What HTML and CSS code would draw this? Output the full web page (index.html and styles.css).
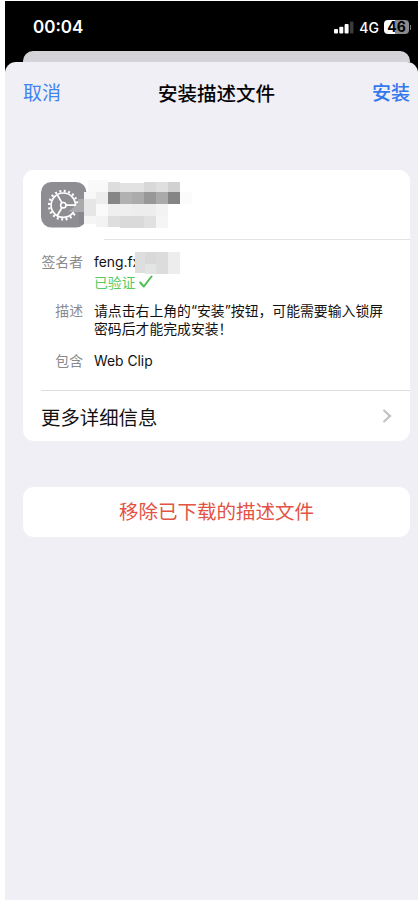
FILE: index.html
```html
<!DOCTYPE html>
<html lang="zh-CN">
<head>
<meta charset="utf-8">
<title>安装描述文件</title>
<link rel="stylesheet" href="styles.css">
</head>
<body>
<div class="phone">
  <header class="status">
    <span class="time">00:04</span>
    <div class="indicators">
      <svg class="signal" width="20" height="13" viewBox="0 0 20 13">
        <rect x="0" y="8" width="4" height="4.6" rx="1" fill="#fff"/>
        <rect x="5.3" y="5.8" width="4" height="6.8" rx="1" fill="#fff"/>
        <rect x="10.6" y="3" width="4" height="9.6" rx="1" fill="#fff"/>
        <rect x="15.9" y="0.5" width="3.6" height="12.1" rx="1" fill="#3b3b3b"/>
      </svg>
      <span class="network">4G</span>
      <span class="battery">46</span>
      <span class="battery-tip"></span>
    </div>
  </header>
  <div class="back-sheet"></div>
  <main class="sheet">
    <nav class="nav">
      <span class="cancel">取消</span>
      <h1>安装描述文件</h1>
      <span class="install">安装</span>
    </nav>
    <section class="card">
      <div class="profile">
        <svg class="profile-art" width="160" height="54" viewBox="38 178 160 54">
          <rect x="41" y="182" width="45.500" height="45.500" rx="10.500" fill="#8d8d92"/>
          <g fill="none" stroke="#fff">
            <circle cx="63.300" cy="205.200" r="12.200" stroke-width="1.700"/>
            <circle cx="63.300" cy="205.200" r="14.200" stroke-width="2.400" stroke-dasharray="2 2.461"/>
            <circle cx="63.300" cy="205.200" r="2.700" stroke-width="1.600"/>
            <path d="M66 205.200H75.500M62 202.900L57.200 194.600M62 207.500L57.200 215.800" stroke-width="1.700"/>
          </g>
          <path d="M68 211.500L78 204V199H87V216H79V212Z" fill="#aaaaad"/>
          <path d="M79 212h6v12h-6z" fill="#88878f"/>
          <g shape-rendering="crispEdges">
            <path d="M84 199h12v17H84z" fill="#e6e6e6"/>
            <path d="M84 192h12v7H84z" fill="#f7f7f7"/>
            <path d="M84 216h12v8H84z" fill="#f5f5f5"/>
            <path d="M88 180h20v12H88z" fill="#f9f9f9"/>
            <path d="M96 192h12v12H96z" fill="#ededed"/>
            <path d="M96 204h12v12H96z" fill="#fafafa"/>
            <path d="M96 216h12v11H96z" fill="#f3f3f3"/>
            <path d="M108 182h12v10H108z" fill="#ddd"/>
            <path d="M120 183h24v9H120z" fill="#e2e2e2"/>
            <path d="M144 182h12v10H144z" fill="#d8d8d8"/>
            <path d="M156 182h12v10H156z" fill="#dfdfdf"/>
            <path d="M168 182h12v10H168z" fill="#d1d1d1"/>
            <path d="M108 192h12v12H108z" fill="#868686"/>
            <path d="M120 192h12v12H120z" fill="#b1b1b1"/>
            <path d="M132 192h12v12H132z" fill="#ababab"/>
            <path d="M144 192h12v12H144z" fill="#989898"/>
            <path d="M156 192h12v12H156z" fill="#aaa"/>
            <path d="M168 192h12v12H168z" fill="#858585"/>
            <path d="M180 192h12v12H180z" fill="#fbfbfb"/>
            <path d="M108 204h24v12H108z" fill="#efefef"/>
            <path d="M132 204h24v12H132z" fill="#ededed"/>
            <path d="M156 204h12v12H156z" fill="#f3f3f3"/>
            <path d="M108 216h12v11H108z" fill="#dedede"/>
            <path d="M120 216h24v12H120z" fill="#dadada"/>
            <path d="M144 216h12v12H144z" fill="#e1e1e1"/>
            <path d="M156 216h12v12H156z" fill="#f5f5f5"/>
          </g>
        </svg>
      </div>
      <dl class="details">
        <dt>签名者</dt>
        <dd>
          <div class="signer">feng.fx
            <svg class="signer-mask" width="46" height="22" viewBox="0 0 46 22" shape-rendering="crispEdges">
              <path d="M0 0h10v21H0z" fill="#dedede"/>
              <path d="M10 0h11v12H10z" fill="#d9d9d9"/>
              <path d="M21 0h12v22H21z" fill="#dcdcdc"/>
              <path d="M33 0h12v22H33z" fill="#ededed"/>
              <path d="M10 12h11v10H10z" fill="#e2e5e3"/>
            </svg>
          </div>
          <div class="verified">已验证
            <svg width="14" height="14" viewBox="0 0 14 14"><path d="M1.200 7.500L4.800 11.500L12.500 1.500" fill="none" stroke="#48c150" stroke-width="2" stroke-linecap="round" stroke-linejoin="round"/></svg>
          </div>
        </dd>
        <dt>描述</dt>
        <dd>请点击右上角的“安装”按钮，可能需要输入锁屏<br>密码后才能完成安装！</dd>
        <dt>包含</dt>
        <dd>Web Clip</dd>
      </dl>
      <div class="more">
        <span>更多详细信息</span>
        <svg width="10" height="16" viewBox="0 0 10 16"><path d="M1.500 2L8 8L1.500 14" fill="none" stroke="#c2c2c4" stroke-width="2.200"/></svg>
      </div>
    </section>
    <section class="card remove">移除已下载的描述文件</section>
  </main>
</div>
</body>
</html>
```
FILE: styles.css
```css
* { box-sizing: border-box; }

body {
  margin: 0;
  padding: 1px 0 0 5px;
  height: 900px;
  overflow: hidden;
  background: #fff;
  color: #111;
  font-family: Inter, "Noto Sans CJK SC", sans-serif;
}

.phone {
  display: flex;
  flex-direction: column;
  height: 899px;
  background: #000;
}

.status {
  display: flex;
  justify-content: space-between;
  height: 50px;
  padding: 14px 7px 0 28px;
  color: #fff;
}

.time {
  font-size: 17px;
  font-weight: 600;
  line-height: 24px;
}

.indicators {
  display: flex;
  align-items: center;
  height: 24px;
}

.network {
  margin: 1px 5px 0 5px;
  font-size: 14px;
  font-weight: 500;
}

.battery {
  width: 25px;
  height: 14px;
  border-radius: 4px;
  background: linear-gradient(90deg, #fff 46%, #8b8b8b 46%);
  color: #000;
  font-size: 14px;
  font-weight: 700;
  line-height: 14px;
  text-align: center;
}

.battery-tip {
  width: 1px;
  height: 5px;
  margin-left: 1px;
  background: #777;
}

.back-sheet {
  height: 11px;
  margin: 0 8px 0 18px;
  border-radius: 10px 10px 0 0;
  background: #d4d3d8;
}

.sheet {
  flex: 1;
  padding: 0 8px 0 18px;
  border-radius: 11px 11px 0 0;
  background: #f0eff5;
}

.nav {
  display: grid;
  grid-template-columns: 1fr auto 1fr;
  height: 108px;
  padding-top: 16px;
  font-size: 19px;
  line-height: 32px;
}

.nav h1 {
  margin: 0;
  color: #050507;
  font-size: 19.500px;
  font-weight: 500;
}

.cancel { color: #3f83ef; }

.install {
  color: #3478ee;
  font-weight: 500;
  text-align: right;
}

.card {
  border-radius: 11px;
  background: #fff;
}

.profile {
  height: 70px;
  margin-left: 81px;
  border-bottom: 1px solid #e3e3e5;
}

.profile-art {
  display: block;
  position: relative;
  left: -66px;
  top: 8px;
}

.details {
  display: grid;
  grid-template-columns: 42px 1fr;
  column-gap: 11px;
  height: 150px;
  margin: 0 0 0 18px;
  padding-top: 12px;
  align-content: start;
  font-size: 13.850px;
  line-height: 21px;
}

.details dt {
  color: #8a8a8d;
  text-align: right;
}

.details dd {
  margin: 0 0 14px;
  line-height: 18px;
  white-space: nowrap;
}

.details dt, .details dd { padding-top: 0; }

.details dd:first-of-type {
  margin-bottom: 8px;
  line-height: 21px;
}

.details dt:not(:first-child) { line-height: 18px; }

.signer { position: relative; }

.signer-mask {
  position: absolute;
  left: 41px;
  top: 0;
}

.verified { color: #57ca60; }

.verified svg { vertical-align: -1px; }

.more {
  display: flex;
  align-items: center;
  justify-content: space-between;
  height: 51px;
  margin-left: 18px;
  padding-right: 18px;
  border-top: 1px solid #dededf;
  font-size: 19.400px;
}

.remove {
  height: 50px;
  margin-top: 46px;
  color: #e35345;
  font-size: 19.500px;
  line-height: 50px;
  text-align: center;
}
```
